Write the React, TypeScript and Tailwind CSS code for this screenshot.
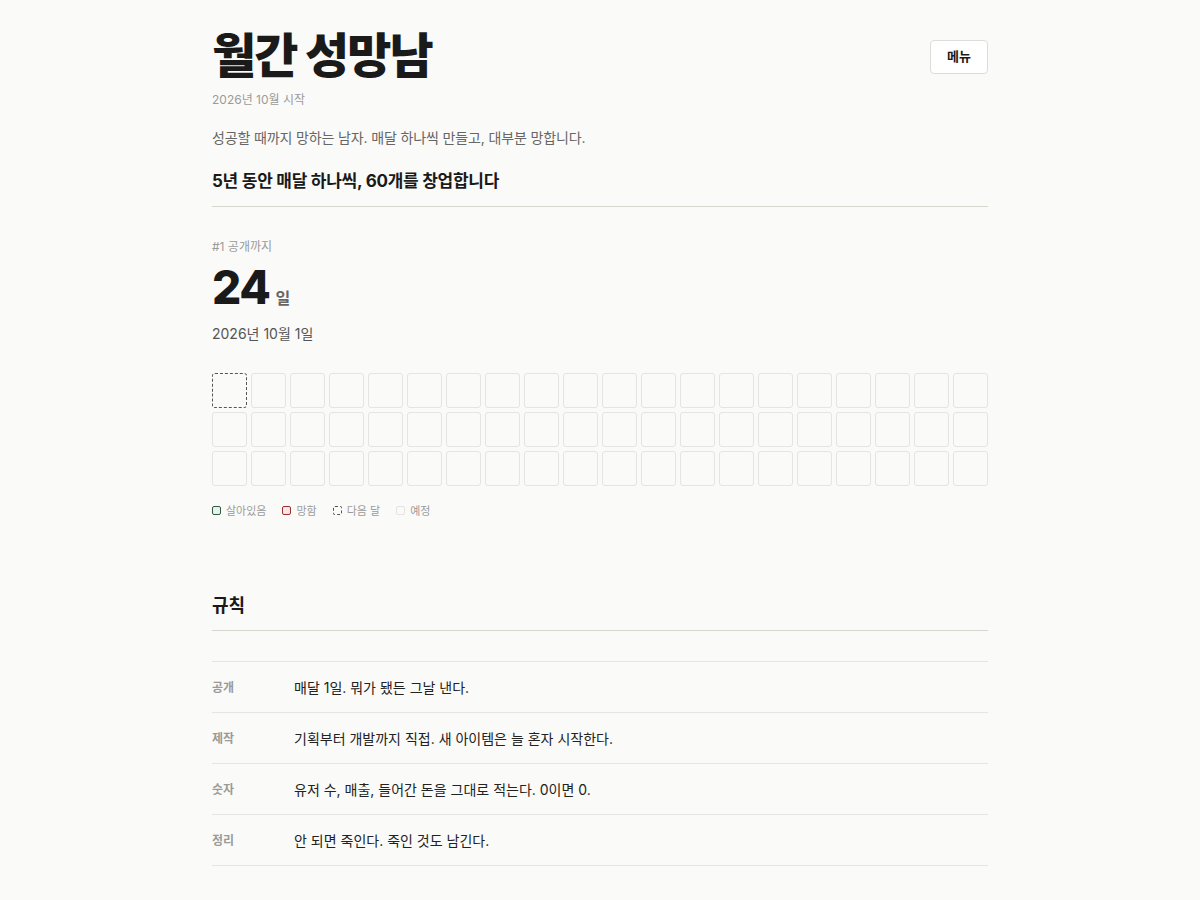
const FONT = { fontFamily: '"Inter", "Noto Sans CJK KR", sans-serif' }

const rules = [
  { label: "공개", text: "매달 1일. 뭐가 됐든 그날 낸다." },
  { label: "제작", text: "기획부터 개발까지 직접. 새 아이템은 늘 혼자 시작한다." },
  { label: "숫자", text: "유저 수, 매출, 들어간 돈을 그대로 적는다. 0이면 0." },
  { label: "정리", text: "안 되면 죽인다. 죽인 것도 남긴다." },
]

const cells = Array.from({ length: 60 }, (_, i) => i)

export default function App() {
  return (
    <div className="min-h-screen bg-[#fafaf8] text-[#1a1a1a]" style={FONT}>
      <div className="mx-auto w-[776px] pt-[26px] pb-10">
        <header className="flex items-start justify-between">
          <div>
            <h1 className="text-[48px] font-extrabold leading-[60px] tracking-[-0.04em]">월간 성망남</h1>
            <p className="mt-[5px] text-[12px] text-[#9a9a9a]">2026년 10월 시작</p>
          </div>
          <button
            type="button"
            className="mt-[14px] h-[34px] w-[58px] rounded-[4px] border border-[#dcdcd8] bg-white text-[13px] font-semibold text-[#1a1a1a]"
          >
            메뉴
          </button>
        </header>

        <p className="mt-[18px] text-[14px] tracking-[-0.01em] text-[#666]">
          성공할 때까지 망하는 남자. 매달 하나씩 만들고, 대부분 망합니다.
        </p>
        <h2 className="mt-[21px] border-b border-[#d6d6ce] pb-[11px] text-[17px] font-bold tracking-[-0.015em]">
          5년 동안 매달 하나씩, 60개를 창업합니다
        </h2>

        <section className="mt-[31px]">
          <p className="text-[12px] text-[#9a9a9a]">#1 공개까지</p>
          <div className="mt-[4px] flex items-baseline gap-[6px]">
            <span className="text-[46px] font-extrabold leading-[54px] tracking-[-0.03em]">24</span>
            <span className="text-[16px] font-semibold text-[#666]">일</span>
          </div>
          <p className="mt-[9px] text-[14px] text-[#555]">2026년 10월 1일</p>

          <div className="mt-[29px] grid grid-cols-20 gap-[4px]">
            {cells.map((i) => (
              <div
                key={i}
                className={`h-[35px] rounded-[3px] border ${
                  i === 0 ? "border-dashed border-[#555]" : "border-[#e4e4e0]"
                }`}
              />
            ))}
          </div>

          <div className="mt-[17px] flex items-center gap-[16px] text-[11px] text-[#9a9a9a]">
            <span className="flex items-center gap-[5px]">
              <span className="h-[9px] w-[9px] rounded-[2px] border border-[#2f5a44] bg-[#e6f2ea]" />
              살아있음
            </span>
            <span className="flex items-center gap-[5px]">
              <span className="h-[9px] w-[9px] rounded-[2px] border border-[#9a2f2f] bg-[#fbe6e6]" />
              망함
            </span>
            <span className="flex items-center gap-[5px]">
              <span className="h-[9px] w-[9px] rounded-[2px] border border-dashed border-[#555]" />
              다음 달
            </span>
            <span className="flex items-center gap-[5px]">
              <span className="h-[9px] w-[9px] rounded-[2px] border border-[#e4e4e0]" />
              예정
            </span>
          </div>
        </section>

        <section className="mt-[73px]">
          <h2 className="border-b border-[#d6d6ce] pb-[11px] text-[18px] font-bold">규칙</h2>
          <div className="mt-[30px] border-t border-[#e4e4e0]">
            {rules.map((r) => (
              <div key={r.label} className="flex h-[51px] items-center border-b border-[#e4e4e0]">
                <span className="w-[82px] pt-[2px] text-[12px] font-semibold text-[#9a9a9a]">{r.label}</span>
                <span className="text-[14px] text-[#222]">{r.text}</span>
              </div>
            ))}
          </div>
        </section>
      </div>
    </div>
  )
}
